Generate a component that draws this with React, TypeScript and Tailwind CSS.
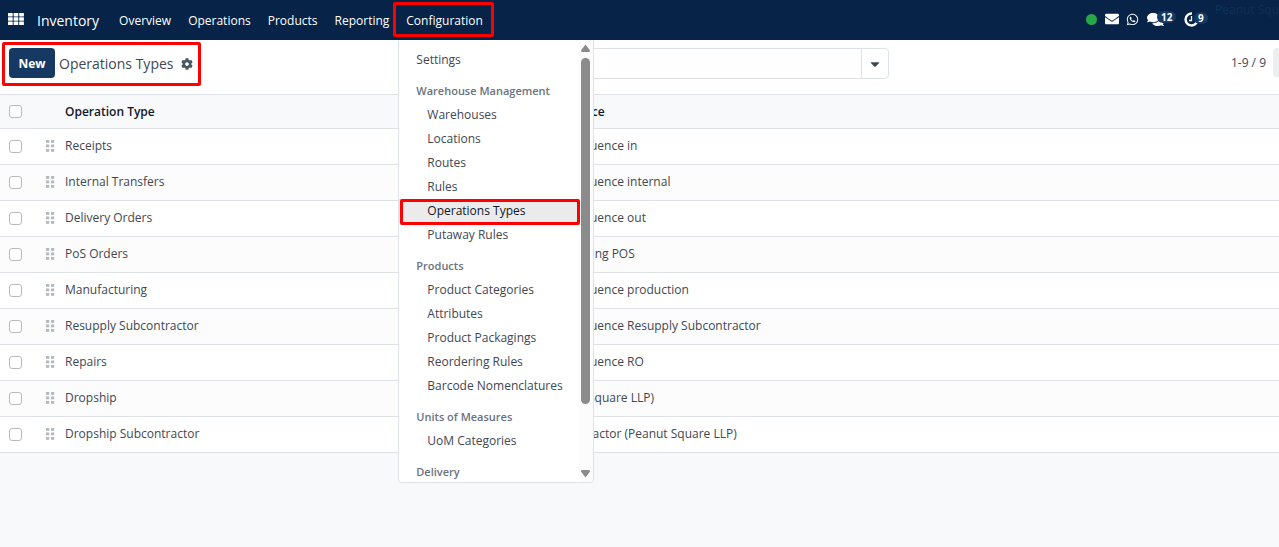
import React, { useState } from 'react';
import { FaCog, FaEnvelope, FaWhatsapp, FaComments, FaCaretDown } from 'react-icons/fa';

const NAV_LINKS = ['Overview', 'Operations', 'Products', 'Reporting'];

const MENU_GROUPS = [
  {
    title: 'Warehouse Management',
    items: ['Warehouses', 'Locations', 'Routes', 'Rules', 'Operations Types', 'Putaway Rules'],
  },
  {
    title: 'Products',
    items: ['Product Categories', 'Attributes', 'Product Packagings', 'Reordering Rules', 'Barcode Nomenclatures'],
  },
  { title: 'Units of Measures', items: ['UoM Categories'] },
  { title: 'Delivery', items: [] },
];

const OPERATION_TYPES = [
  { name: 'Receipts', sequence: 'PeanutSquare Sequence in' },
  { name: 'Internal Transfers', sequence: 'PeanutSquare Sequence internal' },
  { name: 'Delivery Orders', sequence: 'PeanutSquare Sequence out' },
  { name: 'PoS Orders', sequence: 'PeanutSquare Picking POS' },
  { name: 'Manufacturing', sequence: 'PeanutSquare Sequence production' },
  { name: 'Resupply Subcontractor', sequence: 'PeanutSquare Sequence Resupply Subcontractor' },
  { name: 'Repairs', sequence: 'PeanutSquare Sequence RO' },
  { name: 'Dropship', sequence: 'Dropship (Peanut Square LLP)' },
  { name: 'Dropship Subcontractor', sequence: 'Dropship Subcontractor (Peanut Square LLP)' },
];

export default function App() {
  return (
    <div className="min-h-screen overflow-hidden bg-[#f8f9fb] font-['Open_Sans','Noto_Sans',sans-serif] text-[12px] text-[#404753]">
      <Navbar />
      <ControlPanel />
      <OperationTypesTable />
    </div>
  );
}

function Navbar() {
  return (
    <header className="flex h-10 items-center bg-[#072448] pt-0.5 text-white">
      <button aria-label="Home menu" className="ml-2 pb-1">
        <AppsIcon />
      </button>
      <a href="#inventory" className="ml-[13px] pb-0.5 text-[14px]">Inventory</a>
      <nav className="ml-3 flex h-full items-center gap-px">
        {NAV_LINKS.map(link => (
          <a key={link} href={`#${link.toLowerCase()}`} className="px-2">{link}</a>
        ))}
        <div className="relative flex h-full items-center px-2">
          <button aria-expanded="true">Configuration</button>
          <Highlight className="top-0 -right-[3px] bottom-[3px] -left-[5px]" />
          <ConfigurationMenu />
        </div>
      </nav>
      <div className="ml-auto flex h-full items-center pb-1">
        <span className="h-[11px] w-[11px] rounded-full bg-[#28a745]" />
        <button aria-label="Mail" className="ml-2"><FaEnvelope size={14} /></button>
        <button aria-label="WhatsApp" className="ml-[7px]"><FaWhatsapp size={13} /></button>
        <button aria-label="Messages" className="relative ml-2 w-[37px]">
          <FaComments size={17} />
          <Badge count={12} />
        </button>
        <button aria-label="Activities" className="relative w-[31px]">
          <ActivityIcon />
          <Badge count={9} />
        </button>
        <span className="w-[64px] self-start overflow-hidden leading-4 whitespace-nowrap text-[#10315a]">Peanut Square</span>
      </div>
    </header>
  );
}

function ConfigurationMenu() {
  return (
    <div className="absolute top-full left-0 z-10 max-h-[443px] w-[196px] overflow-hidden rounded-b border border-t-0 border-[#dee2e6] bg-white pt-2 text-[#404753]">
      <a href="#settings" className="flex h-6 items-center pl-[17px]">Settings</a>
      {MENU_GROUPS.map(group => (
        <section key={group.title} className="mt-2">
          <h3 className="flex h-[23px] items-center pl-[17px] text-[11px] font-semibold text-[#6b7280]">{group.title}</h3>
          {group.items.map(item => <MenuItem key={item} label={item} />)}
        </section>
      ))}
      <MenuScrollbar />
    </div>
  );
}

function MenuItem({ label }: { label: string }) {
  const active = label === 'Operations Types';
  return (
    <a
      href={`#${label.toLowerCase().replace(/ /g, '-')}`}
      className={`relative mr-[14px] flex h-6 items-center pl-7 whitespace-nowrap ${active ? 'bg-[#ebebeb] text-[#111827]' : ''}`}
    >
      {label}
      {active && <Highlight className="top-0 -right-px -bottom-[2px] left-px" />}
    </a>
  );
}

function MenuScrollbar() {
  return (
    <div className="absolute inset-y-0 right-0 -z-10 flex w-[15px] flex-col items-center bg-[#fcfcfc] py-1">
      <svg width="9" height="8" viewBox="0 0 9 8" fill="#8b8b8b"><path d="M4.5 0.5 9 6.5Q9 8 8 8H1Q0 8 0 6.5Z" /></svg>
      <div className="mt-[6px] h-[346px] w-[9px] rounded-full bg-[#8b8b8b]" />
      <svg className="mt-auto" width="9" height="8" viewBox="0 0 9 8" fill="#8b8b8b"><path d="M4.5 7.5 0 1.5Q0 0 1 0H8Q9 0 9 1.5Z" /></svg>
    </div>
  );
}

function ControlPanel() {
  return (
    <div className="grid h-[54px] grid-cols-[33%_1fr_30.5%] bg-white">
      <div className="relative flex items-start gap-1 pt-2 pl-[9px]">
        <button className="h-[30px] w-[46px] rounded bg-[#163963] pt-0.5 font-bold text-white">New</button>
        <h1 className="flex h-[30px] items-center text-[14px]">Operations Types</h1>
        <button aria-label="Actions" className="ml-1 flex h-8 items-center text-[#4b5563]"><FaCog size={12} /></button>
        <Highlight className="top-[2px] left-[2px] h-[44px] w-[199px]" />
      </div>
      <div className="mt-2 flex h-[31px] rounded border border-[#dee2e6]">
        <input aria-label="Search" className="min-w-0 flex-1 outline-none" />
        <button aria-label="Search options" className="flex w-[27px] items-center justify-center border-l border-[#dee2e6]">
          <FaCaretDown size={14} />
        </button>
      </div>
      <div className="flex items-start justify-end overflow-hidden pt-2">
        <span className="flex h-[29px] items-center">1-9 / 9</span>
        <button aria-label="Previous page" className="-mr-6 ml-[7px] h-[29px] w-[30px] shrink-0 rounded bg-[#edeef0]" />
      </div>
    </div>
  );
}

function OperationTypesTable() {
  const [selected, setSelected] = useState<string[]>([]);

  const toggle = (name: string) =>
    setSelected(prev => (prev.includes(name) ? prev.filter(n => n !== name) : [...prev, name]));
  const allSelected = selected.length === OPERATION_TYPES.length;

  return (
    <table className="w-full table-fixed border-separate border-spacing-0 text-left whitespace-nowrap">
      <thead>
        <tr className="h-[35px] bg-[#f8f9fb] text-[#111827]">
          <th className="w-10 border-y border-[#dee2e6] pl-[9px]">
            <Checkbox
              label="Select all"
              checked={allSelected}
              onChange={() => setSelected(allSelected ? [] : OPERATION_TYPES.map(t => t.name))}
            />
          </th>
          <th className="w-[25px] border-y border-[#dee2e6]" />
          <th className="w-[422px] border-y border-[#dee2e6] font-semibold">Operation Type</th>
          <th className="border-y border-[#dee2e6] font-semibold">Reference Sequence</th>
        </tr>
      </thead>
      <tbody>
        {OPERATION_TYPES.map(type => (
          <tr key={type.name} className="h-9 bg-white even:bg-[#fcfcfc]">
            <td className="border-b border-[#dee2e6] pb-px pl-[9px]">
              <Checkbox
                label={`Select ${type.name}`}
                checked={selected.includes(type.name)}
                onChange={() => toggle(type.name)}
              />
            </td>
            <td className="border-b border-[#dee2e6] pb-0.5 pl-[6px]"><DragHandle /></td>
            <td className="border-b border-[#dee2e6] pb-px">{type.name}</td>
            <td className="border-b border-[#dee2e6] pb-px">{type.sequence}</td>
          </tr>
        ))}
      </tbody>
    </table>
  );
}

function Checkbox({ label, checked, onChange }: { label: string; checked: boolean; onChange: () => void }) {
  return (
    <input
      type="checkbox"
      aria-label={label}
      checked={checked}
      onChange={onChange}
      className="block h-[13px] w-[13px] appearance-none rounded-[3px] border border-[#b9bbbf] bg-white checked:bg-[#163963]"
    />
  );
}

// Red frame drawn over the part of the screen being pointed out
function Highlight({ className }: { className: string }) {
  return <span className={`pointer-events-none absolute rounded-[2px] border-[3px] border-[#ff0000] ${className}`} />;
}

function Badge({ count }: { count: number }) {
  return (
    <span className="absolute top-0 left-[10px] rounded-full bg-[#163963] px-1 text-[10px] leading-3 font-bold">
      {count}
    </span>
  );
}

function AppsIcon() {
  return (
    <svg width="16" height="12" viewBox="0 0 16 12" fill="currentColor">
      {[0, 4.3, 8.6].map(y => [0, 5.6, 11.2].map(x => (
        <rect key={`${x}-${y}`} x={x} y={y} width="4.7" height="3.4" rx="0.3" />
      )))}
    </svg>
  );
}

function ActivityIcon() {
  return (
    <svg width="15" height="15" viewBox="0 0 15 15" fill="none" stroke="currentColor">
      <path d="M8 1.5A6 6 0 1 0 13.5 8.5" strokeWidth="2.4" />
      <path d="M7.5 4v4.5H5" strokeWidth="1.3" />
    </svg>
  );
}

function DragHandle() {
  return (
    <svg width="9" height="12" viewBox="0 0 9 12" fill="#b4b8bf">
      {[0, 4.5, 9].map(y => [0, 5].map(x => (
        <rect key={`${x}-${y}`} x={x} y={y} width="3.2" height="2.8" />
      )))}
    </svg>
  );
}
